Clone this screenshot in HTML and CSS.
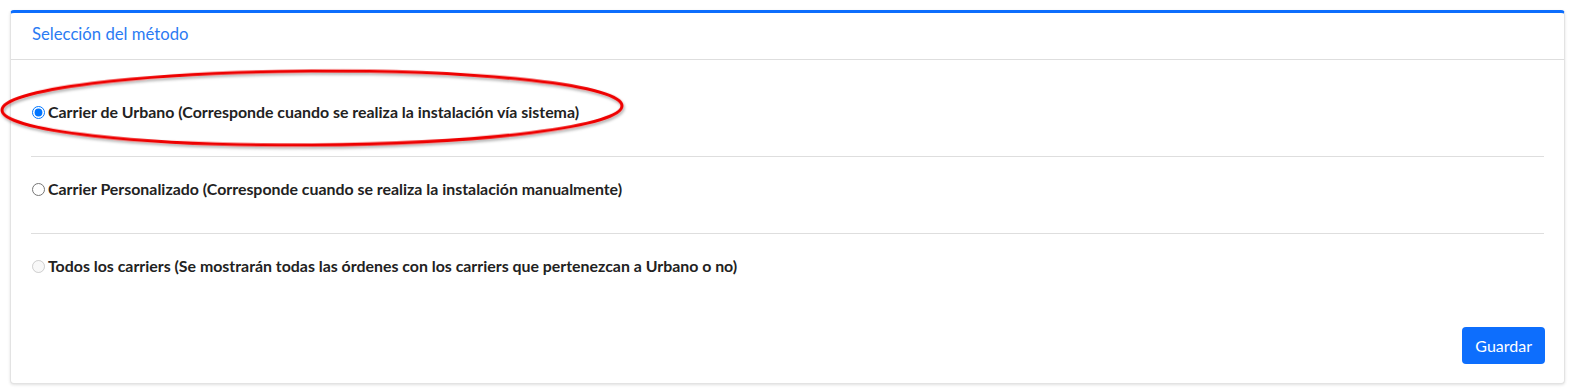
FILE: index.html
```html
<!DOCTYPE html>
<html lang="es">
<head>
    <meta charset="UTF-8">
    <title>Selección del método</title>
    <link rel="stylesheet" href="styles.css">
</head>
<body>
    <div class="card">
        <div class="card-header">Selección del método</div>
        <div class="card-body">
            <div class="option">
                <input type="radio" name="metodo" id="m1" checked>
                <label for="m1">Carrier de Urbano (Corresponde cuando se realiza la instalación vía sistema)</label>
            </div>
            <div class="option">
                <input type="radio" name="metodo" id="m2">
                <label for="m2">Carrier Personalizado (Corresponde cuando se realiza la instalación manualmente)</label>
            </div>
            <div class="option last">
                <input type="radio" name="metodo" id="m3" disabled>
                <label for="m3">Todos los carriers (Se mostrarán todas las órdenes con los carriers que pertenezcan a Urbano o no)</label>
            </div>
            <div class="actions">
                <button class="btn">Guardar</button>
            </div>
        </div>
    </div>

    <!-- marca roja encima de la primera opción -->
    <svg class="highlight" width="640" height="100" viewBox="0 0 640 100">
        <defs>
            <filter id="sombra" x="-5%" y="-20%" width="110%" height="150%">
                <feDropShadow dx="1" dy="2" stdDeviation="1.5" flood-color="#000" flood-opacity="0.35"/>
            </filter>
        </defs>
        <ellipse cx="313" cy="45" rx="310" ry="37" fill="none" stroke="#ee0000" stroke-width="3" filter="url(#sombra)" transform="rotate(-0.4 313 45)"/>
    </svg>
</body>
</html>
```

FILE: styles.css
```css
body {
    margin: 0;
    padding: 10px 5px 5px 10px;
    background: #fff;
    font-family: "Lato", "Liberation Sans", sans-serif;
    color: #212529;
}

.card {
    border: 1px solid #e3e3e3;
    border-top: 3px solid #0d6efd;
    border-radius: 4px;
    background: #fff;
    box-shadow: 0 1px 3px rgba(0,0,0,0.12);
}

.card-header {
    padding: 11px 20px 15px 21px;
    font-size: 16.7px;
    line-height: 20px;
    color: #2b7bf3;
    border-bottom: 1px solid #dedede;
}

.card-body {
    padding: 20px 20px 19px 20px;
}

.option {
    display: flex;
    align-items: center;
    padding: 22px 0 34px 0;
    border-bottom: 1px solid #dedede;
    line-height: 20px;
}

.option.last {
    border-bottom: none;
}

.option input {
    margin: 0 3px 0 1px;
    width: 13px;
    height: 13px;
}

.option label {
    font-weight: bold;
    font-size: 15.9px;
    color: #222;
}

.actions {
    display: flex;
    justify-content: flex-end;
    margin-top: 17px;
}

.btn {
    background: #0d6efd;
    color: #fff;
    border: none;
    border-radius: 4px;
    height: 37px;
    padding: 0 13px;
    margin-right: -1px;
    font-family: inherit;
    font-size: 16px;
}

.highlight {
    position: absolute;
    left: -1px;
    top: 63px;
}
```
